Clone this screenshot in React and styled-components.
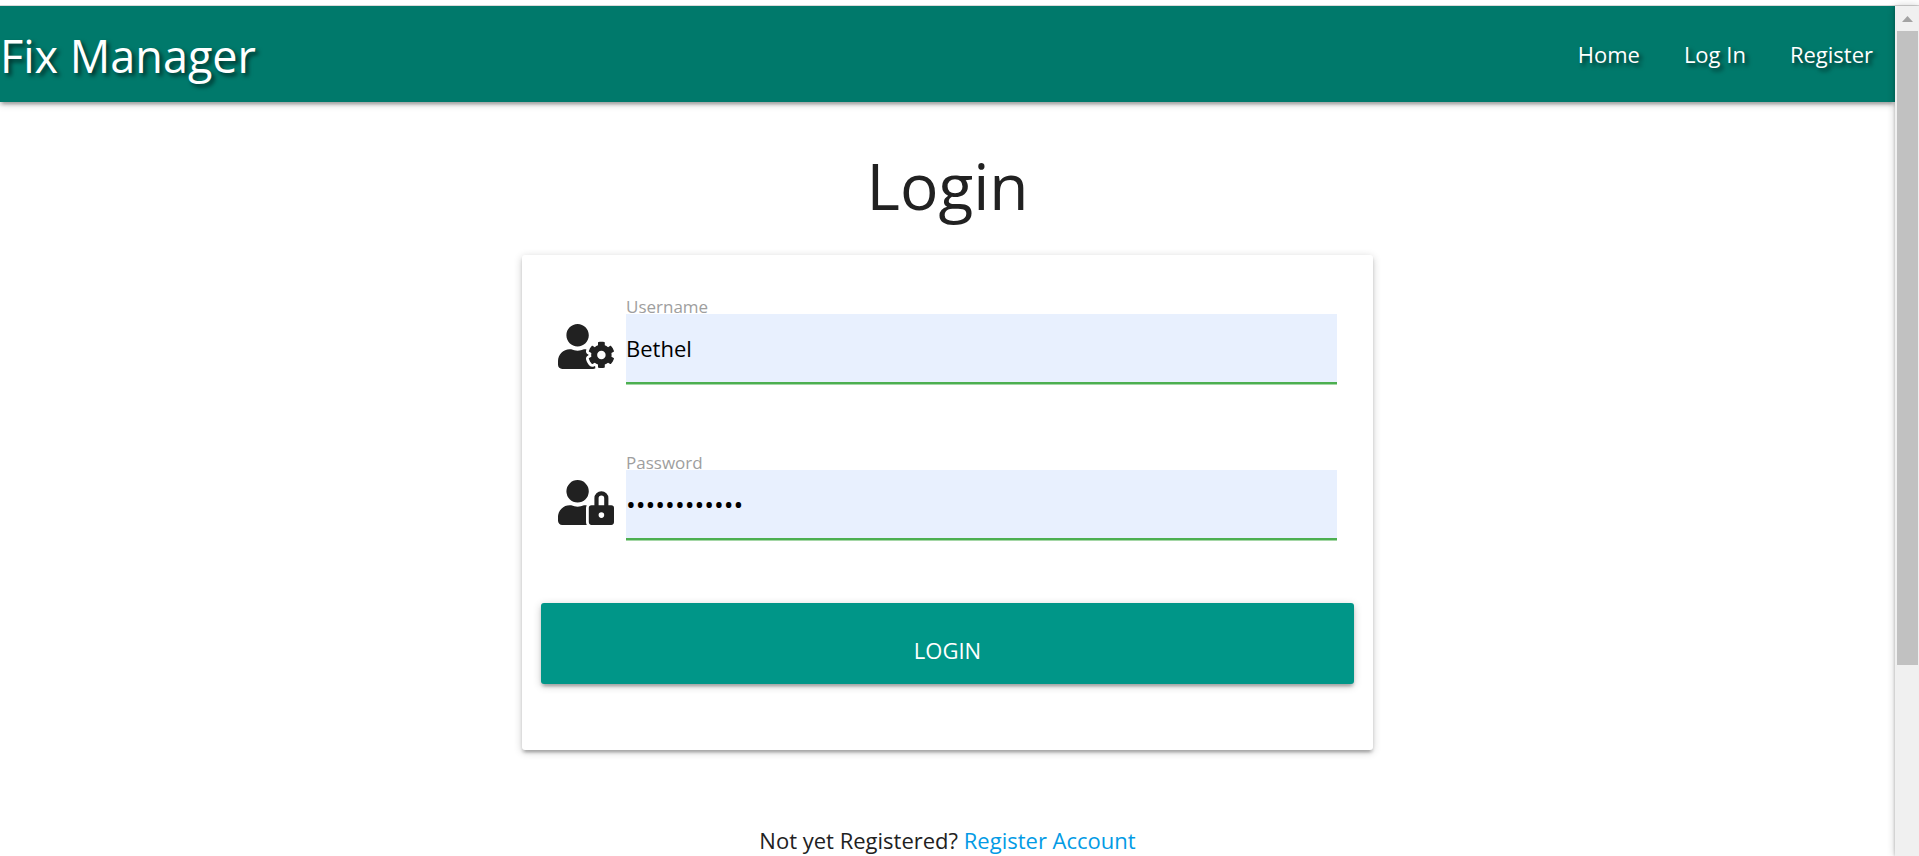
import React, { useState } from "react";
import styled, { createGlobalStyle } from "styled-components";
import { FaUserCog, FaUserLock } from "react-icons/fa";

const GlobalStyle = createGlobalStyle`
  *, *::before, *::after { box-sizing: border-box; }
  body {
    margin: 0;
    background: #fff;
    color: #212121;
    font-family: "Open Sans", "Noto Sans", sans-serif;
    font-size: 22px;
    line-height: 32px;
  }
`;

const raised = `
  box-shadow: 0 3px 3px 0 rgba(0, 0, 0, 0.14),
    0 5px 2px -3px rgba(0, 0, 0, 0.12), 0 2px 8px 0 rgba(0, 0, 0, 0.2);
`;

const Shell = styled.div`
  height: 100vh;
  display: flex;
  flex-direction: column;
  overflow: hidden;
`;

const TopStrip = styled.div`
  flex: none;
  height: 6px;
  border-bottom: 1px solid #dadada;
`;

const Viewport = styled.div`
  flex: 1;
  min-height: 0;
  display: flex;
`;

const Page = styled.div`
  flex: 1;
  min-width: 0;
  overflow: hidden;
`;

const NavBar = styled.header`
  display: flex;
  align-items: center;
  justify-content: space-between;
  height: 96px;
  background: #00796b;
  text-shadow: 3px 3px 4px rgba(0, 0, 0, 0.6);
  ${raised}
`;

const Brand = styled.a`
  padding-top: 4px;
  color: #fff;
  font-size: 45px;
  line-height: 92px;
  text-decoration: none;
`;

const NavLinks = styled.nav`
  display: flex;
`;

const NavLink = styled.a`
  padding: 0 22px;
  color: #fff;
  line-height: 96px;
  text-decoration: none;
`;

const Main = styled.main`
  display: flex;
  flex-direction: column;
  align-items: center;
`;

const Title = styled.h1`
  margin: 48px 0 34px;
  font-size: 64px;
  font-weight: 400;
  line-height: 71px;
`;

const Card = styled.form`
  width: 100%;
  max-width: 851px;
  padding: 36px 19px 66px;
  border-radius: 3px;
  background: #fff;
  ${raised}
`;

const Field = styled.div`
  display: grid;
  grid-template-columns: 68px 1fr;
  padding: 0 17px;
  margin-bottom: 63px;
`;

const FieldLabel = styled.label`
  grid-column: 2;
  height: 23px;
  color: #9e9e9e;
  font-size: 17px;
  line-height: 32px;
`;

const FieldIcon = styled.span`
  display: flex;
  align-items: flex-start;
  padding-top: 10px;
  svg {
    width: 56px;
    height: 45px;
  }
`;

const TextInput = styled.input`
  width: 100%;
  height: 70px;
  padding: 0;
  border: 0;
  border-bottom: 2px solid #4caf50;
  border-radius: 0;
  outline: 0;
  background: #e8f0fe;
  box-shadow: 0 1px 0 0 #a5d7a7;
  color: #000;
  font-family: inherit;
  font-size: ${(p) => (p.type === "password" ? "26px" : "22px")};
`;

const SubmitButton = styled.button`
  display: block;
  width: 100%;
  height: 81px;
  padding: 12px 0 0;
  border: 0;
  border-radius: 3px;
  background: #009688;
  color: #fff;
  font: inherit;
  text-transform: uppercase;
  cursor: pointer;
  ${raised}
`;

const SignUp = styled.p`
  margin: 74px 0 0;
`;

const TextLink = styled.a`
  color: #039be5;
  text-decoration: none;
`;

const ScrollTrack = styled.div`
  position: relative;
  flex: none;
  width: 24px;
  padding: 0 1px 0 2px;
  background: #f0f0f0;
  box-shadow: 0 0 8px 0 rgba(0, 0, 0, 0.2), -1px 0 2px 0 rgba(0, 0, 0, 0.12);
`;

const ScrollArrow = styled.div`
  display: flex;
  align-items: center;
  justify-content: center;
  height: 25px;
  svg {
    width: 11px;
    height: 6px;
  }
`;

const ScrollThumb = styled.div`
  height: 77%;
  max-height: 634px;
  background: #c1c1c1;
`;

export default function App() {
  const [username, setUsername] = useState("Bethel");
  const [password, setPassword] = useState("fixmanager12");

  return (
    <Shell>
      <GlobalStyle />
      <TopStrip />
      <Viewport>
        <Page>
          <NavBar>
            <Brand href="#home">Fix Manager</Brand>
            <NavLinks>
              <NavLink href="#home">Home</NavLink>
              <NavLink href="#login">Log In</NavLink>
              <NavLink href="#register">Register</NavLink>
            </NavLinks>
          </NavBar>
          <Main>
            <Title>Login</Title>
            <Card onSubmit={(e) => e.preventDefault()}>
              <Field>
                <FieldLabel htmlFor="username">Username</FieldLabel>
                <FieldIcon>
                  <FaUserCog />
                </FieldIcon>
                <TextInput
                  id="username"
                  type="text"
                  value={username}
                  onChange={(e) => setUsername(e.target.value)}
                />
              </Field>
              <Field>
                <FieldLabel htmlFor="password">Password</FieldLabel>
                <FieldIcon>
                  <FaUserLock />
                </FieldIcon>
                <TextInput
                  id="password"
                  type="password"
                  value={password}
                  onChange={(e) => setPassword(e.target.value)}
                />
              </Field>
              <SubmitButton type="submit">Login</SubmitButton>
            </Card>
            <SignUp>
              Not yet Registered? <TextLink href="#register">Register Account</TextLink>
            </SignUp>
          </Main>
        </Page>
        <ScrollTrack aria-hidden="true">
          <ScrollArrow>
            <svg viewBox="0 0 11 6">
              <path d="M5.5 0 11 6H0z" fill="#a3a3a3" />
            </svg>
          </ScrollArrow>
          <ScrollThumb />
        </ScrollTrack>
      </Viewport>
    </Shell>
  );
}
